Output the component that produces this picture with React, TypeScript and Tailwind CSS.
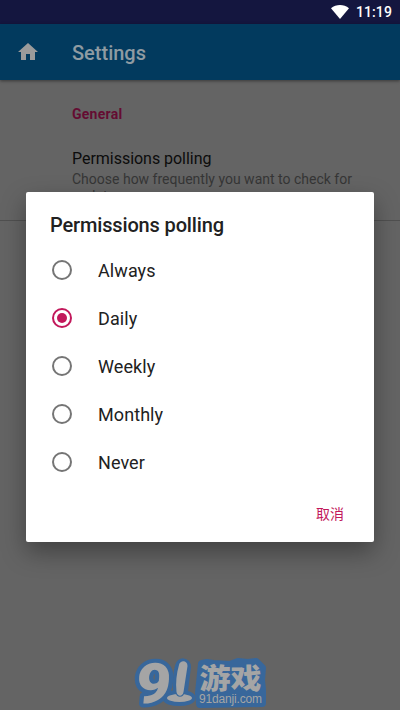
import { useState } from 'react';

const OPTIONS = ['Always', 'Daily', 'Weekly', 'Monthly', 'Never'];

function StatusBar() {
  return (
    <div className="flex h-6 items-center justify-end bg-[#14163f] pr-2 text-white">
      <svg className="mr-[7px] h-[14px] w-[18px]" viewBox="0 0 18 14" fill="currentColor">
        <path d="M0 3.2C5.2-1 12.8-1 18 3.2L9 14z" />
      </svg>
      <span className="text-[14px] leading-6 font-medium tracking-[0.1px]">11:19</span>
    </div>
  );
}

function AppBar() {
  return (
    <header className="relative flex h-14 items-center bg-[#023a5e] pl-4 text-[#8f9ba2] shadow-[0_1px_3px_rgba(0,0,0,0.45)]">
      <svg className="h-6 w-6 text-[#9b9b9b]" viewBox="0 0 24 24" fill="currentColor">
        <path d="M10 20v-6h4v6h5v-8h3L12 3 2 12h3v8z" />
      </svg>
      <h1 className="ml-8 pt-0.5 text-[20px] font-medium">Settings</h1>
    </header>
  );
}

function Radio({ checked }: { checked: boolean }) {
  return (
    <span
      className={`flex h-5 w-5 items-center justify-center rounded-full border-2 ${
        checked ? 'border-[#c2185b]' : 'border-[#757575]'
      }`}
    >
      {checked && <span className="h-2.5 w-2.5 rounded-full bg-[#c2185b]" />}
    </span>
  );
}

function Logo() {
  return (
    <svg className="h-[80px] w-[140px] overflow-visible" viewBox="130 630 140 80">
      {/* Blue halo */}
      <g fill="#38679b" stroke="#38679b" strokeWidth="8" strokeLinejoin="round">
        <path d="M202 664l5-1 6 1 17 1 8-3 10 1 8-1 6 6-1 12 1 10v13l-62 1-1-11z" />
        <path d="M179 666c1-5 8-5 8 1l-3 24c-1 5-6 5-7 0-1-9 0-17 2-25z" />
        <ellipse cx="179" cy="698" rx="12.5" ry="4" />
      </g>
      <text
        transform="translate(134.5 702.5) skewX(-5) scale(1.08 1)"
        fontSize="56"
        fontWeight="900"
        fill="#a5a5a5"
        stroke="#38679b"
        strokeWidth="8"
        strokeLinejoin="round"
        className="font-[Roboto] [paint-order:stroke]"
      >
        9
      </text>
      {/* Exclamation shape standing on its base */}
      <g fill="#a5a5a5">
        <ellipse cx="179.5" cy="698" rx="12.5" ry="4" />
        <path
          d="M179 665c1-5 8.5-5 8.5 1l-4 26c-1 5-6 5-7 0-1-10 0-18 2.5-27z"
          stroke="#38679b"
          strokeWidth="2"
          className="[paint-order:stroke]"
        />
        <text
          transform="translate(199.5 688.5) scale(1 0.92)"
          fontSize="31"
          fontWeight="900"
          className="font-['Noto_Sans_CJK_SC',sans-serif]"
        >
          游戏
        </text>
        <text x="199" y="703" fontSize="12" textLength="63" className="font-['Liberation_Sans']">
          91danji.com
        </text>
      </g>
    </svg>
  );
}

export default function App() {
  const [selected, setSelected] = useState('Daily');

  return (
    <div className="relative flex h-[710px] w-[400px] flex-col overflow-hidden bg-[#646464] font-[Roboto,'Noto_Sans_CJK_SC',sans-serif]">
      <StatusBar />
      <AppBar />

      <main className="flex flex-1 flex-col">
        <section className="h-[141px] border-b border-[#505050] pr-4 pl-[72px]">
          <h2 className="pt-6 text-[14px] leading-5 font-bold tracking-[0.25px] text-[#640c32]">General</h2>
          <p className="mt-[23px] text-[16px] leading-6 tracking-[-0.03px] text-[#0c0c0c]">Permissions polling</p>
          <p className="text-[14px] leading-[17px] text-[#363636]">
            Choose how frequently you want to check for updates
          </p>
        </section>
        <div className="mt-auto flex justify-center">
          <Logo />
        </div>
      </main>

      {/* Dialog */}
      <div className="absolute top-[192px] left-[26px] flex h-[350px] w-[348px] flex-col rounded-[2px] bg-white shadow-[0_10px_24px_rgba(0,0,0,0.35)]">
        <h2 className="px-6 pt-[19px] text-[20px] leading-7 font-medium tracking-[-0.15px] text-[#212121]">
          Permissions polling
        </h2>
        <ul className="mt-[7px]">
          {OPTIONS.map((option) => (
            <li key={option}>
              <button
                className="flex h-12 w-full items-center gap-[26px] pl-[26px] text-[18px] tracking-[0.08px] text-[#212121]"
                onClick={() => setSelected(option)}
              >
                <Radio checked={option === selected} />
                {option}
              </button>
            </li>
          ))}
        </ul>
        <div className="mt-auto flex justify-end px-[30px] pb-[18px]">
          <button className="text-[14px] leading-5 text-[#c2185b]">取消</button>
        </div>
      </div>
    </div>
  );
}
